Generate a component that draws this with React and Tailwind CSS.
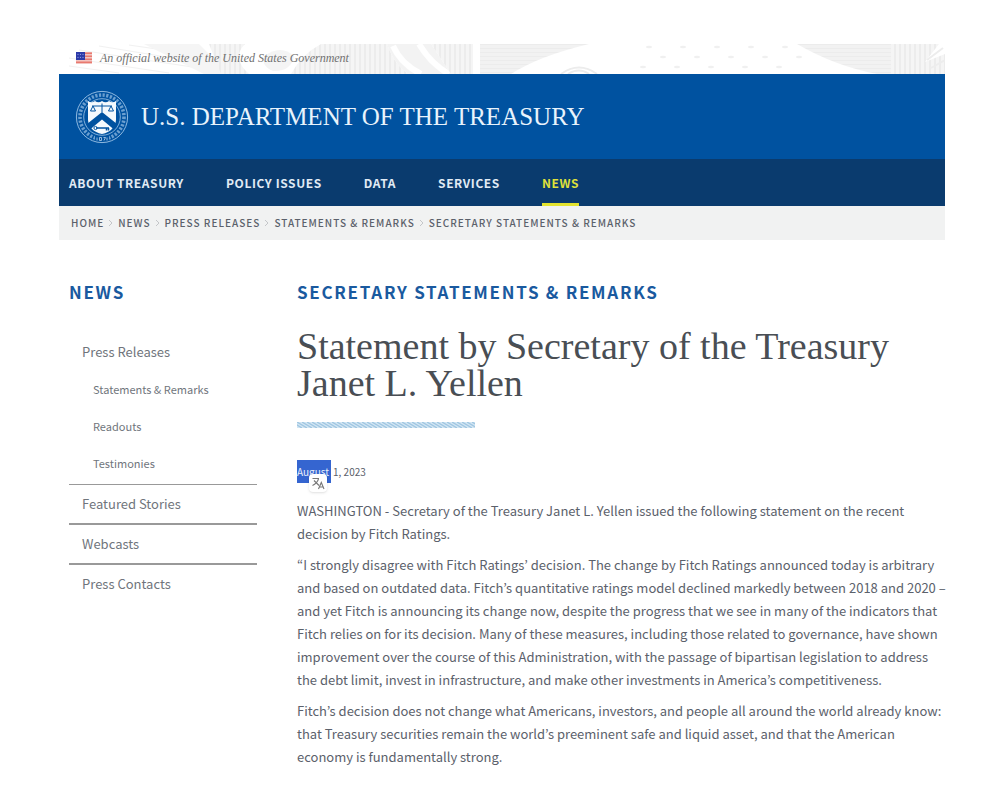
import React from "react";

const serif = "font-['Liberation_Serif',serif]";

const navItems = ["About Treasury", "Policy Issues", "Data", "Services", "News"];
const crumbs = [
  "Home",
  "News",
  "Press Releases",
  "Statements & Remarks",
  "Secretary Statements & Remarks",
];
const sections = ["Featured Stories", "Webcasts", "Press Contacts"];
const subsections = ["Statements & Remarks", "Readouts", "Testimonies"];

function Flag() {
  return (
    <svg className="h-3 w-4 shrink-0" viewBox="0 0 16 12" aria-hidden="true">
      <rect width="16" height="12" fill="#f6d9d6" />
      {[0, 3, 6, 9].map((y) => (
        <rect key={y} y={y + 0.4} width="16" height="1.8" fill="#e8796f" />
      ))}
      <rect width="9" height="8" fill="#2c3aa8" />
      {[2, 4.5, 7].map((x) => (
        <g key={x} fill="#8e97dc">
          <circle cx={x} cy="2.4" r="0.6" />
          <circle cx={x} cy="5.4" r="0.6" />
        </g>
      ))}
    </svg>
  );
}

function Engraving() {
  const dots = [];
  for (let r = 0; r < 3; r++) {
    for (let c = 0; c < 5; c++) {
      dots.push([590 + c * 34 + (r % 2) * 17 - r * 3, 3 + r * 10]);
    }
  }
  return (
    <svg
      className="absolute inset-0 h-full w-full"
      viewBox="0 0 886 30"
      preserveAspectRatio="none"
      aria-hidden="true"
    >
      <defs>
        <pattern id="vert" width="5" height="4" patternUnits="userSpaceOnUse">
          <rect width="5" height="4" fill="#f5f5f5" />
          <rect width="2" height="4" fill="#ececec" />
        </pattern>
        <pattern id="horiz" width="4" height="4" patternUnits="userSpaceOnUse">
          <rect width="4" height="4" fill="#f2f2f2" />
          <rect width="4" height="1" fill="#ececec" />
        </pattern>
      </defs>
      <g fill="none" stroke="#f1f1f1" strokeWidth="1">
        <path d="M20 6 L140 24 M40 2 L150 20 M70 1 L160 14 M10 14 L110 29 M10 22 L60 29" />
      </g>
      <path d="M85 0 H140 L170 30 H145 Z" fill="#f5f5f5" />
      <path d="M150 0 H186 Q172 14 190 30 H162 Z" fill="url(#vert)" />
      <path d="M205 12 Q222 0 235 12 Q232 28 214 27 Q202 22 205 12Z" fill="#f4f4f4" />
      <path d="M232 30 Q243 10 262 0 H328 Q336 22 350 30 Z" fill="url(#vert)" />
      <path d="M328 0 H372 L392 30 H350 Q336 22 328 0Z" fill="#f3f3f3" />
      <path d="M334 2 Q342 20 362 30 M360 0 Q372 20 390 30" fill="none" stroke="#fff" strokeWidth="6" />
      <path d="M372 0 H414 V30 H392 Z" fill="url(#vert)" />
      <path d="M421 0 H530 Q480 12 452 30 H421 Z" fill="url(#horiz)" />
      <path d="M502 30 Q520 17 538 30 M509 30 Q520 23 530 30" fill="none" stroke="#ececec" strokeWidth="2" />
      {dots.map(([x, y]) => (
        <ellipse key={`${x}-${y}`} cx={x} cy={y} rx="3" ry="1.2" fill="#f0f0f0" />
      ))}
      <path d="M738 0 H832 V30 H818 Q776 22 738 0Z" fill="url(#horiz)" />
      <path d="M832 0 H880 L866 18 L886 10 V30 H832 Z" fill="url(#vert)" />
      <path d="M868 16 L884 4 M872 24 L886 16" stroke="#ededed" strokeWidth="2" />
    </svg>
  );
}

function Seal() {
  return (
    <svg className="size-[54px] shrink-0" viewBox="0 0 54 54" role="img" aria-label="Treasury seal">
      <g fill="none" stroke="#8fb9e0">
        <circle cx="27" cy="27" r="25.6" strokeWidth="1" />
        <circle cx="27" cy="27" r="22" strokeWidth="3.6" strokeDasharray="2.2 1.5" opacity="0.75" />
        <circle cx="27" cy="27" r="18.3" strokeWidth="0.9" />
      </g>
      <rect x="20" y="46" width="14" height="5" fill="#0052a0" />
      <path d="M22 47.5v3M24.5 47.5h2v3h-2zM28.5 47.5h2l-1.5 3M32 47.5v3" fill="none" stroke="#b8d3ec" strokeWidth="0.8" />
      <path
        d="M13 11 Q16.500 13.500 20 11 Q23.500 13.500 27 11 Q30.500 13.500 34 11 Q37.500 13.500 41 11 L41 30 Q40 41 27 44 Q14 41 13 30 Z"
        fill="#f4f9fd"
      />
      <path d="M27 22 L42 34 L39 39.500 L27 29.500 L15 39.500 L12 34 Z" fill="#0052a0" />
      <g fill="none" stroke="#0052a0" strokeWidth="1">
        <path d="M17 16 H37 M27 13.500 V22" />
        <path d="M18 16 L15.500 21 H20.500 Z M36 16 L33.500 21 H38.500 Z" />
        <path d="M21 38 H34 M31.500 38 V40.500 M33.500 38 V40.500" strokeWidth="1.500" />
        <circle cx="20.500" cy="38" r="1.600" />
      </g>
    </svg>
  );
}

function Wave() {
  return (
    <svg className="mt-5 h-1.5 w-[178px]" aria-hidden="true">
      <defs>
        <pattern id="wave" width="5" height="6" patternUnits="userSpaceOnUse">
          <rect width="5" height="6" fill="#d3e6f3" />
          <path d="M-5 0 L5 6 M0 0 L10 6" stroke="#9fc6e2" strokeWidth="1.3" />
        </pattern>
      </defs>
      <rect width="178" height="6" fill="url(#wave)" />
    </svg>
  );
}

function TranslateIcon() {
  return (
    <svg className="size-3.5" viewBox="0 0 14 14" fill="none" stroke="#777" strokeWidth="1.1" aria-hidden="true">
      <path d="M1.500 2.500 H8 M3 4.500 L8 9.500 M7.500 3 Q6 7.500 1.500 9.500" />
      <path d="M7.500 13 L10.300 6.500 L13 13 M8.500 11 H12" />
    </svg>
  );
}

export default function App() {
  return (
    <div className="min-h-screen bg-white pt-11 pb-7 pl-[59px] font-['Noto_Sans_CJK_KR',sans-serif] text-[#5b616b]">
      <header className="mr-[55px]">
        <div className="relative flex h-[30px] pt-1.5 pl-[17px]">
          <Engraving />
          <div className="relative flex h-4 items-center gap-2">
            <Flag />
            <p className={`text-[12px] leading-4 italic text-[#707070] ${serif}`}>
              An official website of the United States Government
            </p>
          </div>
        </div>
        <div className="flex h-[85px] items-center gap-3 bg-[#0052a0] pl-4">
          <Seal />
          <a href="#home" className={`text-[25px] leading-8 text-[#e8f3fc] ${serif}`}>
            U.S. DEPARTMENT OF THE TREASURY
          </a>
        </div>
        <nav aria-label="Main" className="flex h-[47px] gap-[42px] bg-[#0a3b6e] pl-2.5">
          {navItems.map((item) => (
            <a
              key={item}
              href="#nav"
              className={
                item === "News"
                  ? "border-b-[3px] border-[#e3e32f] pt-3.5 text-[12px] leading-5 font-bold tracking-wider text-[#dfe03a] uppercase"
                  : "pt-3.5 text-[12px] leading-5 font-bold tracking-wider text-[#e1ebf5] uppercase"
              }
            >
              {item}
            </a>
          ))}
        </nav>
        <nav aria-label="Breadcrumb" className="h-[34px] bg-[#f1f2f2] pl-3">
          <ol className="flex gap-1 text-[10px] leading-[34px] font-medium tracking-widest uppercase">
            {crumbs.map((c, i) => (
              <li key={c} className="flex items-center gap-1">
                {i > 0 && (
                  <svg className="h-2 w-1.5" viewBox="0 0 6 8" fill="none" stroke="#c4c6c9" aria-hidden="true">
                    <path d="M1 1 L4 4 L1 7" />
                  </svg>
                )}
                <a href="#crumb">{c}</a>
              </li>
            ))}
          </ol>
        </nav>
      </header>

      <div className="flex gap-10 pt-10 pr-[50px] pl-2.5">
        <aside className="w-[188px] shrink-0">
          <h2 className="text-[17px] leading-6 font-bold tracking-widest text-[#1a5a9f] uppercase">News</h2>
          <ul className="pt-7 text-[13px] leading-5 text-[#70757c]">
            <li className="border-b border-[#999] pt-2">
              <a href="#releases" className="block pb-[9px] pl-[13px] leading-6">Press Releases</a>
              <ul className="pl-6 text-[11px]">
                {subsections.map((s) => (
                  <li key={s} className="h-[37px] pt-1.5">
                    <a href="#sub">{s}</a>
                  </li>
                ))}
              </ul>
            </li>
            {sections.map((s) => (
              <li key={s} className="border-b-2 border-[#999] py-[7px] pl-[13px] leading-6 last:border-b-0">
                <a href="#section">{s}</a>
              </li>
            ))}
          </ul>
        </aside>

        <main className="min-w-0 flex-1">
          <h2 className="text-[17px] leading-6 font-bold tracking-widest text-[#1a5a9f] uppercase">
            Secretary Statements &amp; Remarks
          </h2>
          <h1 className={`mt-6 text-[38px] leading-[37px] text-[#494e54] ${serif}`}>
            Statement by Secretary of the Treasury Janet L. Yellen
          </h1>
          <Wave />
          <p className="mt-8 flex text-[10px] leading-[23px]">
            <span className="relative mr-0.5 bg-[#3565d0] pr-0.5 text-[#e9effb]">
              August
              <button
                type="button"
                aria-label="Translate"
                className="absolute top-3.5 left-3 flex size-[18px] items-center justify-center rounded-sm bg-white shadow"
              >
                <TranslateIcon />
              </button>
            </span>
            1, 2023
          </p>
          <div className="mt-4 flex flex-col gap-2 text-[13px] leading-[23px]">
            <p>
              WASHINGTON - Secretary of the Treasury Janet L. Yellen issued the following statement on the recent
              decision by Fitch Ratings.
            </p>
            <p>
              “I strongly disagree with Fitch Ratings’ decision. The change by Fitch Ratings announced today is
              arbitrary and based on outdated data. Fitch’s quantitative ratings model declined markedly between 2018
              and 2020 – and yet Fitch is announcing its change now, despite the progress that we see in many of the
              indicators that Fitch relies on for its decision. Many of these measures, including those related to
              governance, have shown improvement over the course of this Administration, with the passage of bipartisan
              legislation to address the debt limit, invest in infrastructure, and make other investments in America’s
              competitiveness.
            </p>
            <p>
              Fitch’s decision does not change what Americans, investors, and people all around the world already
              know: that Treasury securities remain the world’s preeminent safe and liquid asset, and that the American
              economy is fundamentally strong.
            </p>
          </div>
        </main>
      </div>
    </div>
  );
}
